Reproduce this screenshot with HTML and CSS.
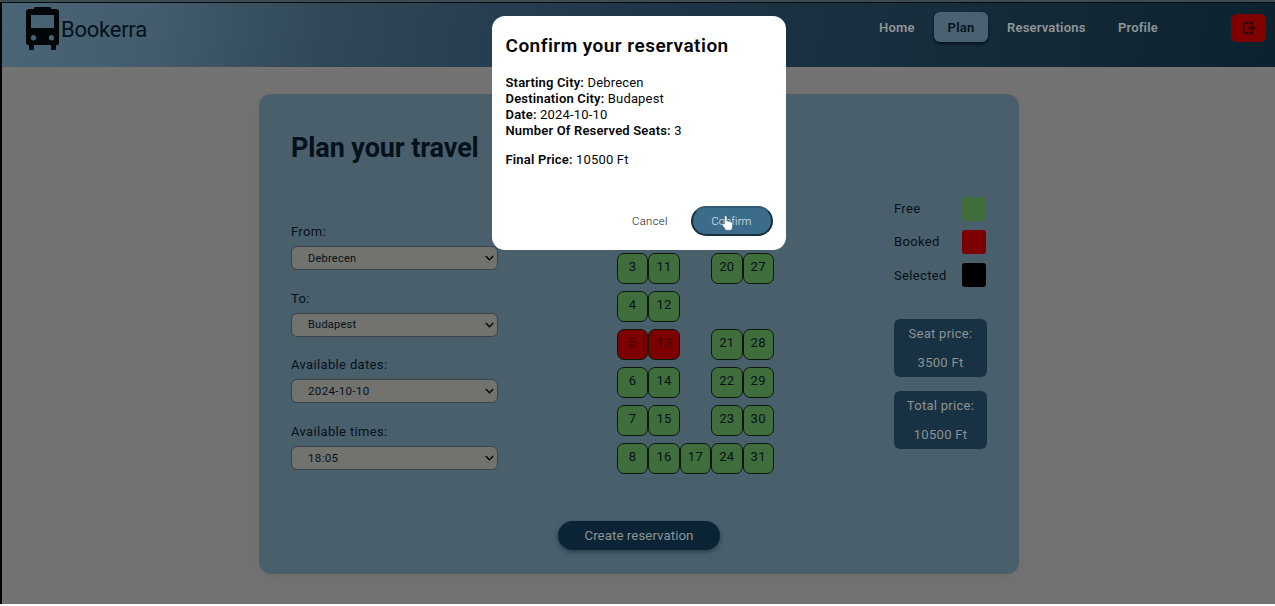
FILE: index.html
```html
<!DOCTYPE html>
<html lang="en">
<head>
<meta charset="utf-8">
<title>Bookerra</title>
<link rel="stylesheet" href="styles.css">
</head>
<body>
<div class="app">
  <header class="header">
    <div class="brand">
      <svg class="bus" viewBox="0 0 34 44" width="34" height="44">
        <path fill="#020609" fill-rule="evenodd" d="M8 2V1q0-1 1-1h15q1 0 1 1v1h5q3 0 3 3v31q0 2-2 2h-1v4q0 1-1 1h-3q-1 0-1-1v-4H8v4q0 1-1 1H4q-1 0-1-1v-4H2q-2 0-2-2V5q0-3 3-3zM5 8v13h23V8zM7.500 28a2.800 2.800 0 1 0 .01 0zM25.500 28a2.800 2.800 0 1 0 .01 0z"/>
      </svg>
      <span class="brand-name">Bookerra</span>
    </div>
    <nav class="nav">
      <a class="link home">Home</a>
      <a class="link active">Plan</a>
      <a class="link reservations">Reservations</a>
      <a class="link profile">Profile</a>
    </nav>
    <button class="logout" aria-label="Log out">
      <svg viewBox="0 0 12 12" width="12" height="12" fill="none" stroke="#2c0303" stroke-width="1.400"><path d="M9.300 3V.8H1v10.400h8.300V9M4.500 6h6.500M9 3.800 11.200 6 9 8.200"/></svg>
    </button>
  </header>

  <main class="card">
    <section class="planner">
      <h1 class="title">Plan your travel</h1>
      <div class="field"><label class="label">From:</label><div class="select"><span class="value">Debrecen</span><svg class="chevron" viewBox="0 0 8 5"><path d="M.7.7 4 4 7.300.7"/></svg></div></div>
      <div class="field"><label class="label">To:</label><div class="select"><span class="value">Budapest</span><svg class="chevron" viewBox="0 0 8 5"><path d="M.7.7 4 4 7.300.7"/></svg></div></div>
      <div class="field"><label class="label">Available dates:</label><div class="select"><span class="value digits">2024-10-10</span><svg class="chevron" viewBox="0 0 8 5"><path d="M.7.7 4 4 7.300.7"/></svg></div></div>
      <div class="field"><label class="label">Available times:</label><div class="select"><span class="value digits">18:05</span><svg class="chevron" viewBox="0 0 8 5"><path d="M.7.7 4 4 7.300.7"/></svg></div></div>
    </section>

    <section class="seats">
      <span class="seat">3</span><span class="seat">11</span><span></span><span class="seat">20</span><span class="seat">27</span>
      <span class="seat">4</span><span class="seat">12</span><span></span><span></span><span></span>
      <span class="seat booked">5</span><span class="seat booked">13</span><span></span><span class="seat">21</span><span class="seat">28</span>
      <span class="seat">6</span><span class="seat">14</span><span></span><span class="seat">22</span><span class="seat">29</span>
      <span class="seat">7</span><span class="seat">15</span><span></span><span class="seat">23</span><span class="seat">30</span>
      <span class="seat">8</span><span class="seat">16</span><span class="seat">17</span><span class="seat">24</span><span class="seat">31</span>
    </section>

    <aside class="side">
      <div class="legend"><span>Free</span><i class="swatch free"></i></div>
      <div class="legend"><span>Booked</span><i class="swatch taken"></i></div>
      <div class="legend"><span>Selected</span><i class="swatch selected"></i></div>
      <div class="price first"><span>Seat price:</span><span>3500 Ft</span></div>
      <div class="price"><span>Total price:</span><span>10500 Ft</span></div>
    </aside>

    <footer class="actions"><button class="create">Create reservation</button></footer>
  </main>
</div>

<div class="modal" role="dialog">
  <h2 class="modal-title">Confirm your reservation</h2>
  <p class="line"><b>Starting City:</b> Debrecen</p>
  <p class="line"><b>Destination City:</b> Budapest</p>
  <p class="line"><b>Date:</b> 2024-10-10</p>
  <p class="line"><b>Number Of Reserved Seats:</b> 3</p>
  <p class="line final"><b>Final Price:</b> 10500 Ft</p>
  <div class="modal-actions">
    <button class="cancel">Cancel</button>
    <button class="confirm">Confirm
      <svg class="cursor" viewBox="0 0 12 16"><path d="M3 9V2q0-1.500 1.200-1.500T5.400 2v4q1.400-.6 2 .5 1.300-.4 1.800.6 1.800-.3 1.800 1.200v3q0 2-1.200 4H4.300Q3 13.200.8 10.300.3 9 1.300 8.600 2.200 8.400 3 9z"/></svg>
    </button>
  </div>
</div>
</body>
</html>
```
FILE: styles.css
```css
* { box-sizing: border-box; }
body {
  margin: 0;
  height: 606px;
  overflow: hidden;
  background: #fff;
  font-family: Roboto, "Liberation Sans", sans-serif;
  font-size: 13px;
  letter-spacing: .35px;
  color: #05111a;
}
button { font-family: inherit; border: 0; padding: 0; letter-spacing: inherit; }
h1, h2, p { margin: 0; }

.app {
  height: 604px;
  background: #737373;
  border-top: 2px solid #3a4e52;
  box-shadow: inset 2px 0 0 #020202, inset 0 1px 0 #020202;
}
.header {
  display: flex;
  height: 65px;
  margin-left: 2px;
  border-top: 1px solid #02080e;
  background: linear-gradient(100deg, #4a6576 0%, #435d6e 12%, #304858 25%, #1e3648 50%, #152c3b 75%, #0d222f 100%);
}
.brand { display: flex; width: 853px; padding: 4px 0 0 24px; }
.brand-name {
  margin-left: 1px;
  line-height: 45px;
  font-size: 22px;
  letter-spacing: -.25px;
}
.nav { display: flex; width: 376px; padding-top: 9px; }
.link {
  height: 30px;
  line-height: 31px;
  font-weight: 600;
  letter-spacing: .2px;
  color: #929596;
}
.home { width: 79px; padding-left: 24px; }
.active {
  width: 54px;
  text-align: center;
  border-radius: 6px;
  color: #06131d;
  background: #496172;
  box-shadow: 0 2px 3px #06121c;
}
.reservations { margin-left: 19px; width: 111px; }
.profile { width: 80px; }
.logout {
  display: flex;
  align-items: center;
  justify-content: center;
  width: 35px;
  height: 28px;
  margin-top: 11px;
  border-radius: 6px;
  background: #800000;
}

.card {
  display: grid;
  grid-template-columns: 326px 245px 1fr;
  grid-template-rows: 390px 1fr;
  width: 760px;
  height: 480px;
  margin: 27px 0 0 259px;
  padding: 0 32px;
  border-radius: 12px;
  background: #4a5f6c;
  box-shadow: 0 4px 18px #6a6d6a;
}
.title {
  height: 129px;
  padding-top: 37px;
  line-height: 34px;
  font-size: 27px;
  letter-spacing: -.1px;
}
.field { width: 207px; height: 66.700px; }
.label { display: block; line-height: 17px; padding-bottom: 6px; }
.select {
  display: flex;
  align-items: center;
  justify-content: space-between;
  height: 24px;
  padding: 0 3px 0 16px;
  border: 1px solid #38434a;
  border-radius: 6px;
  background: #72726f;
}
.value { font-size: 11px; letter-spacing: .25px; }
.digits { font-size: 11.500px; letter-spacing: .35px; }
.chevron { width: 9px; height: 6px; fill: none; stroke: #080808; stroke-width: 1.300; }

.seats {
  display: grid;
  grid-template-columns: repeat(5, 31.400px);
  grid-auto-rows: 31px;
  row-gap: 7.050px;
  align-content: start;
  padding-top: 159px;
}
.seat {
  border: 1px solid #0b190d;
  border-radius: 7px;
  line-height: 26px;
  text-align: center;
  background: #3f6e3c;
}
.booked { background: #7c0000; color: #3a0000; }

.side { width: 93px; justify-self: end; padding-top: 102.600px; }
.legend {
  display: flex;
  justify-content: space-between;
  align-items: center;
  height: 24px;
  margin-bottom: 9.400px;
  padding-right: 1px;
}
.swatch { width: 24px; height: 24px; border-radius: 3px; }
.free { background: #3f6e3c; }
.taken { background: #7c0000; }
.selected { background: #000; }
.price {
  display: flex;
  flex-direction: column;
  align-items: center;
  justify-content: space-between;
  height: 58px;
  margin-bottom: 14px;
  padding: 5px 0;
  border-radius: 6px;
  line-height: 19px;
  letter-spacing: .28px;
  color: #8d9395;
  background: #193243;
}
.first { margin-top: 32px; }

.actions { grid-column: 1 / -1; display: flex; justify-content: center; padding-top: 37px; }
.create {
  width: 162px;
  height: 29px;
  border-radius: 15px;
  color: #8d9395;
  background: #0a2435;
  box-shadow: 0 2px 4px #273b49;
  font-size: 13.330px;
  letter-spacing: .04px;
}

.modal {
  position: absolute;
  left: 492px;
  top: 16px;
  width: 294px;
  height: 234px;
  padding: 17px 13.500px;
  border-radius: 13px;
  background: #fff;
  color: #050608;
}
.modal-title { line-height: 26px; margin-bottom: 16px; font-size: 19px; font-weight: 600; letter-spacing: .47px; }
.line { line-height: 16px; letter-spacing: .17px; }
.line b { font-weight: 600; }
.final { margin-top: 13px; }
.modal-actions { display: flex; justify-content: flex-end; margin-top: 38px; }
.cancel { width: 81px; background: none; font-size: 11.300px; font-weight: 300; color: #111; }
.confirm {
  position: relative;
  width: 82px;
  height: 30px;
  border: 2px solid #1a2f3e;
  border-top-color: #315a78;
  border-radius: 15px;
  background: #3c6c8c;
  color: #e6f0f5;
  font-size: 11px;
  letter-spacing: .15px;
  font-weight: 300;
}
.cursor { position: absolute; left: 28px; top: 7px; width: 13px; height: 16px; fill: #fff; stroke: #34566c; stroke-width: .5; }
```
